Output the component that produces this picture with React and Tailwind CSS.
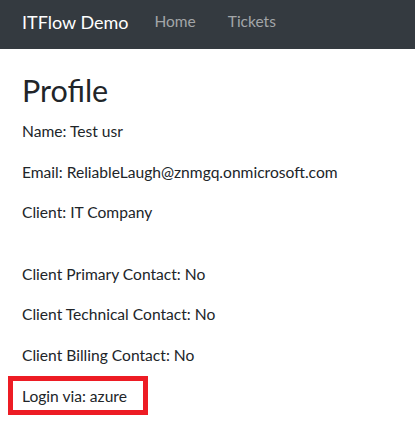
export default function App() {
  const rows = [
    "Name: Test usr",
    "Email: ReliableLaugh@znmgq.onmicrosoft.com",
    "Client: IT Company",
  ];
  const contacts = [
    "Client Primary Contact: No",
    "Client Technical Contact: No",
    "Client Billing Contact: No",
  ];

  return (
    <div className="min-h-[422px] bg-white text-[#212529] font-['Lato',sans-serif]">
      {/* NAVBAR */}
      <nav className="h-[49px] bg-[#343a40] flex items-center px-[22px] pb-[5px]">
        <span className="text-white text-[18px] leading-none mr-[26px]">ITFlow Demo</span>
        <a className="text-[#a3a6a9] text-[15.5px] leading-none mr-[32px]">Home</a>
        <a className="text-[#a3a6a9] text-[15.5px] leading-none">Tickets</a>
      </nav>

      {/* PROFILE */}
      <main className="px-[22px] pt-[23px]">
        <h1 className="text-[30.5px] leading-[37px] mb-[10px]">Profile</h1>

        {rows.map((r) => (
          <p key={r} className="text-[15.6px] leading-[24px] mb-[16.5px]">
            {r}
          </p>
        ))}

        <div className="h-[21px]" />

        {contacts.map((r) => (
          <p key={r} className="text-[15.6px] leading-[24px] mb-[16.5px]">
            {r}
          </p>
        ))}

        <div className="-ml-[14px] -mt-[7px] w-[140px] h-[39px] border-[5px] border-[#ed1c24] flex items-center pl-[9px]">
          <span className="text-[15.6px] leading-[24px]">Login via: azure</span>
        </div>
      </main>
    </div>
  );
}
